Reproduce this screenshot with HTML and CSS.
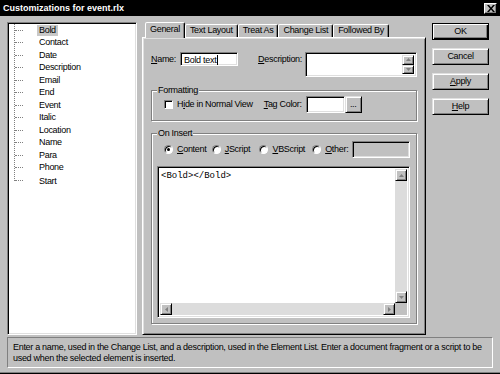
FILE: index.html
```html
<!DOCTYPE html>
<html lang="en">
<head>
    <meta charset="UTF-8">
    <title>Customizations for event.rlx</title>
    <link rel="stylesheet" href="styles.css">
</head>
<body>

<div class="window">
    <div class="titlebar">
        <span class="title">Customizations for event.rlx</span>
        <span class="close">
            <svg width="8" height="7" viewBox="0 0 8 7"><path d="M0 0h2l2 2.5L6 0h2L5 3.5 8 7H6L4 4.5 2 7H0l3-3.5z" fill="#000"/></svg>
        </span>
    </div>

    <div class="main">
        <!-- element list -->
        <div class="tree">
            <ul>
                <li class="selected"><span class="branch"></span><span class="item">Bold</span></li>
                <li><span class="branch"></span><span class="item">Contact</span></li>
                <li><span class="branch"></span><span class="item">Date</span></li>
                <li><span class="branch"></span><span class="item">Description</span></li>
                <li><span class="branch"></span><span class="item">Email</span></li>
                <li><span class="branch"></span><span class="item">End</span></li>
                <li><span class="branch"></span><span class="item">Event</span></li>
                <li><span class="branch"></span><span class="item">Italic</span></li>
                <li><span class="branch"></span><span class="item">Location</span></li>
                <li><span class="branch"></span><span class="item">Name</span></li>
                <li><span class="branch"></span><span class="item">Para</span></li>
                <li><span class="branch"></span><span class="item">Phone</span></li>
                <li><span class="branch"></span><span class="item">Start</span></li>
            </ul>
        </div>

        <!-- tab control -->
        <div class="tabs">
            <div class="tab-row">
                <div class="tab active">General</div>
                <div class="tab">Text Layout</div>
                <div class="tab">Treat As</div>
                <div class="tab">Change List</div>
                <div class="tab">Followed By</div>
            </div>
            <div class="panel">
                <div class="name-row">
                    <span class="lbl"><u>N</u>ame:</span>
                    <div class="field name-input">Bold text<span class="caret"></span></div>
                    <span class="lbl desc-label"><u>D</u>escription:</span>
                    <div class="field desc-box">
                        <div class="spin">
                            <span class="sbtn"><svg width="5" height="3" viewBox="0 0 5 3"><path d="M2.5 0L5 3H0z" fill="#808080"/></svg></span>
                            <span class="sbtn"><svg width="5" height="3" viewBox="0 0 5 3"><path d="M0 0h5L2.5 3z" fill="#808080"/></svg></span>
                        </div>
                    </div>
                </div>

                <div class="group formatting">
                    <span class="group-title">Formatting</span>
                    <span class="checkbox"></span>
                    <span class="opt-text">H<u>i</u>de in Normal View</span>
                    <span class="lbl tag-label"><u>T</u>ag Color:</span>
                    <div class="field color-box"></div>
                    <span class="btn dots">...</span>
                </div>

                <div class="group insert">
                    <span class="group-title">On Insert</span>
                    <div class="radio-row">
                        <span class="opt w48"><span class="radio checked"></span><span class="opt-text"><u>C</u>ontent</span></span>
                        <span class="opt w48"><span class="radio"></span><span class="opt-text"><u>J</u>Script</span></span>
                        <span class="opt w53"><span class="radio"></span><span class="opt-text"><u>V</u>BScript</span></span>
                        <span class="opt"><span class="radio"></span><span class="opt-text"><u>O</u>ther:</span></span>
                        <div class="field other-input"></div>
                    </div>
                    <div class="editor">
                        <div class="editor-text">&lt;Bold&gt;&lt;/Bold&gt;</div>
                        <div class="vbar">
                            <span class="sbtn"><svg width="5" height="3" viewBox="0 0 5 3"><path d="M2.5 0L5 3H0z" fill="#808080"/></svg></span>
                            <span class="track"></span>
                            <span class="sbtn"><svg width="5" height="3" viewBox="0 0 5 3"><path d="M0 0h5L2.5 3z" fill="#808080"/></svg></span>
                        </div>
                        <div class="hbar">
                            <span class="sbtn"><svg width="3" height="5" viewBox="0 0 3 5"><path d="M3 0v5L0 2.5z" fill="#808080"/></svg></span>
                            <span class="track"></span>
                            <span class="sbtn"><svg width="3" height="5" viewBox="0 0 3 5"><path d="M0 0l3 2.5L0 5z" fill="#808080"/></svg></span>
                        </div>
                        <div class="corner"></div>
                    </div>
                </div>
            </div>
        </div>

        <!-- dialog buttons -->
        <div class="buttons">
            <span class="btn default">OK</span>
            <span class="btn">Cancel</span>
            <span class="btn"><u>A</u>pply</span>
            <span class="btn"><u>H</u>elp</span>
        </div>
    </div>

    <div class="status">
        Enter a name, used in the Change List, and a description, used in the Element List. Enter a document fragment or a script to be used when the selected element is inserted.
    </div>
</div>

</body>
</html>
```

FILE: styles.css
```css
body {
    margin: 0;
    background-color: #c0c0c0;
    font-family: "Liberation Sans", Arial, sans-serif;
    font-size: 9px;
    letter-spacing: -0.3px;
    color: #000;
}
u {
    text-decoration-thickness: 1px;
    text-underline-offset: 1px;
}
.window {
    width: 500px;
    height: 374px;
    box-sizing: border-box;
    display: flex;
    flex-direction: column;
    background-color: #c0c0c0;
    box-shadow: inset 0 -1px #000, inset 0 -2px #808080;
}

/* Title bar */
.titlebar {
    height: 16px;
    flex-shrink: 0;
    display: flex;
    align-items: center;
    justify-content: space-between;
    padding: 0 3px;
    background-color: #000;
    color: #fff;
}
.title {
    font-weight: bold;
    letter-spacing: 0;
}
.close {
    width: 13px;
    height: 11px;
    box-sizing: border-box;
    display: flex;
    align-items: center;
    justify-content: center;
    background-color: #c0c0c0;
    border: 1px solid;
    border-color: #fff #000 #000 #fff;
    box-shadow: inset -1px -1px #808080;
}

.main {
    display: flex;
    align-items: flex-start;
    padding: 6px 7px 0;
}

/* Sunken boxes */
.tree, .field, .editor {
    box-sizing: border-box;
    background-color: #fff;
    border: 1px solid;
    border-color: #808080 #fff #fff #808080;
    box-shadow: inset 1px 1px #000, inset -1px -1px #dfdfdf;
}

/* Element tree */
.tree {
    width: 130px;
    height: 313px;
    padding-top: 1px;
}
.tree ul {
    list-style: none;
    margin: 0 0 0 6px;
    padding: 0;
    border-left: 1px dotted #808080;
}
.tree li {
    display: flex;
    align-items: center;
    height: 12.5px;
}
.tree li:last-child {
    height: 7px;
    align-items: flex-end;
}
.branch {
    width: 8px;
    border-top: 1px dotted #808080;
}
.item {
    margin-left: 14px;
    padding: 0 2px;
    line-height: 11px;
}
.tree li:last-child .item {
    margin-bottom: -6px;
}
.selected .item {
    background-color: #c8c8c8;
}

/* Tabs */
.tabs {
    width: 284px;
    height: 313px;
    margin-left: 5px;
    display: flex;
    flex-direction: column;
}
.tab-row {
    position: relative;
    display: flex;
    align-items: flex-end;
    height: 15px;
    padding-left: 3px;
}
.tab {
    height: 13px;
    box-sizing: border-box;
    padding: 0 4px;
    line-height: 11px;
    background-color: #c0c0c0;
    border: 1px solid;
    border-bottom: none;
    border-color: #fff #000 transparent #fff;
    border-radius: 2px 2px 0 0;
    box-shadow: inset -1px 0 #808080;
}
.tab.active {
    height: 16px;
    margin-bottom: -1px;
    padding-top: 1px;
}
.panel {
    flex: 1;
    box-sizing: border-box;
    display: flex;
    flex-direction: column;
    padding: 14px 8px 0 8px;
    border: 1px solid;
    border-color: #fff #000 #000 #fff;
    box-shadow: inset 1px 1px #dfdfdf, inset -1px -1px #808080;
}

.lbl {
    line-height: 11px;
}
.name-row {
    display: flex;
    align-items: flex-start;
    height: 25px;
}
.name-row .lbl {
    margin-top: 2px;
}
.name-input {
    width: 58px;
    height: 14px;
    margin-left: 4px;
    padding: 2px 3px;
    line-height: 10px;
}
.caret {
    display: inline-block;
    width: 1px;
    height: 10px;
    margin-left: 1px;
    vertical-align: top;
    background-color: #000;
}
.desc-label {
    margin-left: auto;
}
.desc-box {
    width: 112px;
    height: 25px;
    margin-left: 3px;
    display: flex;
    justify-content: flex-end;
    padding: 2px;
}
.spin {
    width: 12px;
    display: flex;
    flex-direction: column;
}
.spin .sbtn {
    flex: 1;
}

/* Scroll buttons and push buttons */
.sbtn, .btn {
    box-sizing: border-box;
    display: flex;
    align-items: center;
    justify-content: center;
    background-color: #c0c0c0;
    border: 1px solid;
    border-color: #dfdfdf #000 #000 #dfdfdf;
    box-shadow: inset 1px 1px #fff, inset -1px -1px #808080;
}
.sbtn {
    width: 12px;
    height: 12px;
}

/* Group boxes */
.group {
    position: relative;
    box-sizing: border-box;
    border: 1px solid #808080;
    box-shadow: inset 1px 1px #fff, 1px 1px #fff;
}
.group-title {
    position: absolute;
    top: -6px;
    left: 5px;
    padding: 0 1px;
    line-height: 11px;
    background-color: #c0c0c0;
}
.formatting {
    margin-top: 13px;
    height: 31px;
    display: flex;
    align-items: center;
    padding: 0 0 3px 12px;
}
.checkbox, .radio {
    width: 9px;
    height: 9px;
    flex-shrink: 0;
    box-sizing: border-box;
    background-color: #fff;
    border: 1px solid;
    border-color: #808080 #fff #fff #808080;
    box-shadow: inset 1px 1px #000;
}
.opt-text {
    margin-left: 4px;
    line-height: 11px;
}
.tag-label {
    margin-left: 11px;
}
.color-box {
    width: 39px;
    height: 17px;
    margin-left: 4px;
}
.dots {
    width: 17px;
    height: 17px;
    line-height: 10px;
}

.insert {
    margin-top: 12px;
    height: 191px;
    display: flex;
    flex-direction: column;
    padding: 7px 6px 5px 5px;
}
.radio-row {
    display: flex;
    align-items: center;
    height: 17px;
    padding-left: 7px;
}
.opt {
    display: flex;
    align-items: center;
}
.w48 { width: 48px; }
.w53 { width: 53px; }
.radio {
    border-radius: 50%;
    display: flex;
    align-items: center;
    justify-content: center;
}
.radio.checked::after {
    content: "";
    width: 3px;
    height: 3px;
    border-radius: 50%;
    background-color: #000;
}
.other-input {
    width: 58px;
    height: 17px;
    margin-left: 4px;
    background-color: #c0c0c0;
}

/* Script editor */
.editor {
    flex: 1;
    margin-top: 8px;
    padding: 2px;
    display: grid;
    grid-template-columns: 1fr 12px;
    grid-template-rows: 1fr 12px;
}
.editor-text {
    padding: 2px 1px;
    font-family: "Liberation Mono", "Courier New", monospace;
    font-size: 9px;
    letter-spacing: 0;
    line-height: 11px;
}
.vbar, .hbar {
    display: flex;
    background-color: #dcdcdc;
}
.vbar {
    flex-direction: column;
}
.track {
    flex: 1;
}
.corner {
    background-color: #c0c0c0;
}

/* Dialog buttons */
.buttons {
    width: 57px;
    margin-left: 6px;
    padding-top: 1px;
    display: flex;
    flex-direction: column;
    gap: 8px;
}
.buttons .btn {
    height: 17px;
    line-height: 11px;
}
.btn.default {
    border-color: #000;
    box-shadow: inset 1px 1px #fff, inset -1px -1px #000, inset -2px -2px #808080;
}

/* Status line */
.status {
    height: 31px;
    box-sizing: border-box;
    margin: 2px 7px 0;
    padding: 4px 5px;
    line-height: 11px;
    border: 1px solid;
    border-color: #808080 #fff #fff #808080;
}
```
